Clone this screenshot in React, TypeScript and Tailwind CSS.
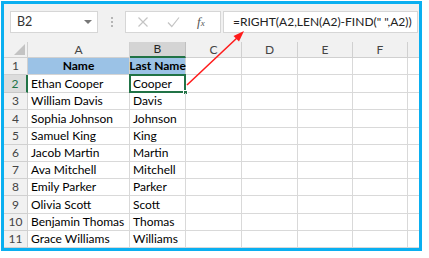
import React from "react";

const rows = [
  { n: 1, a: "Name", b: "Last Name", h: "h-[17px]" },
  { n: 2, a: "Ethan Cooper", b: "Cooper", h: "h-[18px]" },
  { n: 3, a: "William Davis", b: "Davis", h: "h-[17px]" },
  { n: 4, a: "Sophia Johnson", b: "Johnson", h: "h-[18px]" },
  { n: 5, a: "Samuel King", b: "King", h: "h-[17px]" },
  { n: 6, a: "Jacob Martin", b: "Martin", h: "h-[17px]" },
  { n: 7, a: "Ava Mitchell", b: "Mitchell", h: "h-[17px]" },
  { n: 8, a: "Emily Parker", b: "Parker", h: "h-[17px]" },
  { n: 9, a: "Olivia Scott", b: "Scott", h: "h-[18px]" },
  { n: 10, a: "Benjamin Thomas", b: "Thomas", h: "h-[17px]" },
  { n: 11, a: "Grace Williams", b: "Williams", h: "h-[17px]" },
];

const cols = [
  { id: "A", w: "w-[102px]" },
  { id: "B", w: "w-[56px]" },
  { id: "C", w: "w-[56px]" },
  { id: "D", w: "w-[56px]" },
  { id: "E", w: "w-[55px]" },
  { id: "F", w: "w-[55px]" },
];

const App = () => {
  return (
    <div className="relative w-[429px] h-[258px] bg-white font-['Lato',sans-serif] text-[12px] text-black overflow-hidden">
      <div className="ml-px mt-px w-[421px] h-[250px] border-[3px] border-[#0aaff0] flex flex-col overflow-hidden">
        {/* formula bar */}
        <div className="h-[38px] shrink-0 bg-[#f1f1f1] flex items-start pt-[7px] pl-[6px] pr-px">
          <div className="w-[88px] h-[22px] bg-white border border-[#d6d6d6] flex items-center justify-between pl-[6px] pr-[5px]">
            <span className="text-[12.5px] text-[#333]">B2</span>
            <span className="w-0 h-0 border-l-[4px] border-r-[4px] border-t-[4px] border-l-transparent border-r-transparent border-t-[#777]" />
          </div>
          <div className="w-[27px] h-[22px] flex flex-col items-center justify-center gap-[2px]">
            <span className="w-[2px] h-[2px] bg-[#b5b5b5]" />
            <span className="w-[2px] h-[2px] bg-[#b5b5b5]" />
            <span className="w-[2px] h-[2px] bg-[#b5b5b5]" />
          </div>
          <div className="w-[96px] h-[22px] bg-white border border-[#d6d6d6] flex items-center pl-[11px]">
            <svg width="12" height="12" viewBox="0 0 12 12" className="mr-[18px]">
              <path d="M1.5 1.5 L10.5 10.5 M10.5 1.5 L1.5 10.5" stroke="#c4c4c4" strokeWidth="1.2" />
            </svg>
            <svg width="13" height="12" viewBox="0 0 13 12" className="mr-[17px]">
              <path d="M1 6.5 L4.8 10.5 L12 1.5" stroke="#c4c4c4" strokeWidth="1.2" fill="none" />
            </svg>
            <span className="font-['Liberation_Serif',serif] italic text-[13px] text-[#555]">
              f<span className="text-[9px]">x</span>
            </span>
          </div>
          <div className="flex-1 ml-[2px] h-[22px] bg-white border border-[#d6d6d6] flex items-center pl-[9px]">
            <span className="text-[12px] text-[#222] whitespace-nowrap">=RIGHT(A2,LEN(A2)-FIND(" ",A2))</span>
          </div>
        </div>

        {/* column headers */}
        <div className="h-[16px] shrink-0 flex bg-[#f1f1f1]">
          <div className="relative w-[24px] shrink-0 border-r border-b border-[#d0d0d0]">
            <svg className="absolute right-[2px] bottom-[2px]" width="11" height="11" viewBox="0 0 11 11">
              <polygon points="11,0 11,11 0,11" fill="#c3c3c3" />
            </svg>
          </div>
          {cols.map((c) =>
            c.id === "B" ? (
              <div key={c.id} className={`${c.w} shrink-0 bg-[#d4d4d4] border-r border-[#c0c0c0] border-b-2 border-b-[#217346] flex items-center justify-center text-[#262626]`}>
                {c.id}
              </div>
            ) : (
              <div key={c.id} className={`${c.w} shrink-0 border-r border-b border-[#d0d0d0] flex items-center justify-center text-[#444]`}>
                {c.id}
              </div>
            )
          )}
          <div className="flex-1 border-b border-[#d0d0d0]" />
        </div>

        {/* rows */}
        {rows.map((r) => (
          <div key={r.n} className={`${r.h} shrink-0 flex`}>
            {r.n === 2 ? (
              <div className="w-[24px] shrink-0 bg-[#dcdcdc] border-r-2 border-r-[#217346] border-b border-b-[#c8c8c8] flex items-center justify-center text-[#217346]">
                {r.n}
              </div>
            ) : (
              <div className="w-[24px] shrink-0 bg-[#f1f1f1] border-r border-b border-[#d0d0d0] flex items-center justify-center text-[#444]">
                {r.n}
              </div>
            )}
            {r.n === 1 ? (
              <>
                <div className="w-[102px] shrink-0 bg-[#9bc2e6] border-r border-b border-[#d4d4d4] flex items-center justify-center font-bold">
                  {r.a}
                </div>
                <div className="w-[56px] shrink-0 bg-[#9bc2e6] border-r border-b border-[#d4d4d4] flex items-center justify-center font-bold whitespace-nowrap">
                  {r.b}
                </div>
              </>
            ) : (
              <>
                <div className="w-[102px] shrink-0 border-r border-b border-[#d9d9d9] flex items-center pl-[3px] whitespace-nowrap">
                  {r.a}
                </div>
                <div className="relative w-[56px] shrink-0 border-r border-b border-[#d9d9d9] flex items-center pl-[3px] whitespace-nowrap">
                  {r.b}
                  {r.n === 2 && (
                    <>
                      <span className="absolute -left-px -top-px -right-px -bottom-px border-2 border-[#217346]" />
                      <span className="absolute -right-[3px] -bottom-[3px] w-[5px] h-[5px] bg-[#217346] border border-white" />
                    </>
                  )}
                </div>
              </>
            )}
            <div className="w-[56px] shrink-0 border-r border-b border-[#d9d9d9]" />
            <div className="w-[56px] shrink-0 border-r border-b border-[#d9d9d9]" />
            <div className="w-[55px] shrink-0 border-r border-b border-[#d9d9d9]" />
            <div className="w-[55px] shrink-0 border-r border-b border-[#d9d9d9]" />
            <div className="flex-1 border-b border-[#d9d9d9]" />
          </div>
        ))}
      </div>

      {/* red arrow */}
      <svg className="absolute left-0 top-0 pointer-events-none" width="429" height="258">
        <line x1="187" y1="85" x2="238" y2="37" stroke="#ff1a1a" strokeWidth="1.5" />
        <polygon points="244,31 233.5,36 239,41.5" fill="#ff1a1a" />
      </svg>
    </div>
  );
};

export default App;
